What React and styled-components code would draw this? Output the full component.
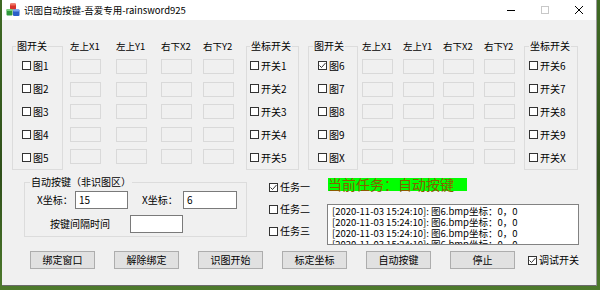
import React from "react";
import styled, { createGlobalStyle } from "styled-components";

const GlobalStyle = createGlobalStyle`
  html, body {
    margin: 0;
    padding: 0;
  }
  body {
    width: 600px;
    height: 290px;
    overflow: hidden;
    background: linear-gradient(180deg, #3f6a24 0%, #2f4f1a 60%, #4d7a2c 100%);
    font-family: "Noto Sans CJK SC", "Noto Sans", sans-serif;
    color: #000;
  }
`;

const Window = styled.div`
  margin-left: 2px;
  width: 595px;
  height: 286px;
  background: #f0f0f0;
  border-right: 1px solid #9a9a9a;
  border-bottom: 1px solid #6a6a6a;
  box-sizing: border-box;
  display: flex;
  flex-direction: column;
`;

const TitleBar = styled.div`
  height: 20px;
  background: #fff;
  display: flex;
  align-items: center;
  flex-shrink: 0;
`;

const Title = styled.span`
  margin-left: 4px;
  font-size: 9.5px;
  line-height: 12px;
  flex: 1;
`;

const Control = styled.div`
  width: 34px;
  height: 20px;
  display: flex;
  align-items: center;
  justify-content: center;
`;

const Body = styled.div`
  padding: 20px 0 0 10px;
  display: flex;
  flex-direction: column;
`;

const TopRow = styled.div`
  display: flex;
  align-items: flex-start;
`;

const Group = styled.fieldset`
  margin: 0 0 0 ${(p) => p.$ml || 0}px;
  width: ${(p) => p.$w}px;
  height: ${(p) => p.$h}px;
  box-sizing: border-box;
  border: 1px solid #dcdcdc;
  padding: 0;
  min-width: 0;
`;

const Legend = styled.legend`
  font-size: 10px;
  line-height: 12px;
  padding: 0 1px;
  margin-left: ${(p) => p.$ml || 3}px;
`;

const CheckList = styled.div`
  margin-top: 2px;
  padding-left: ${(p) => p.$pl}px;
  display: flex;
  flex-direction: column;
`;

const CheckRow = styled.label`
  height: ${(p) => p.$h || 23}px;
  display: flex;
  align-items: center;
  gap: 2px;
  font-size: 10px;
  line-height: 12px;
  white-space: nowrap;
`;

const Box = styled.span`
  width: 9px;
  height: 9px;
  box-sizing: border-box;
  border: 1px solid #333;
  background: #fff;
  display: flex;
  align-items: center;
  justify-content: center;
  flex-shrink: 0;
`;

const Column = styled.div`
  margin-left: ${(p) => p.$ml}px;
  width: 31px;
  display: flex;
  flex-direction: column;
`;

const Header = styled.div`
  height: 12px;
  line-height: 12px;
  font-size: 9.5px;
  white-space: nowrap;
`;

const BoxList = styled.div`
  margin-top: 7px;
  display: flex;
  flex-direction: column;
  gap: 7.5px;
`;

const CoordBox = styled.div`
  width: 31px;
  height: 15px;
  box-sizing: border-box;
  border: 1px solid #d9d9d9;
  background: #f0f0f0;
`;

const MiddleRow = styled.div`
  margin-top: 6px;
  display: flex;
  align-items: flex-start;
`;

const FieldRow = styled.div`
  display: flex;
  align-items: center;
  height: 18px;
  padding-left: 12px;
  margin-top: ${(p) => p.$mt}px;
`;

const FieldLabel = styled.span`
  width: ${(p) => p.$w}px;
  margin-left: ${(p) => p.$ml || 0}px;
  font-size: 10px;
  line-height: 12px;
  white-space: nowrap;
`;

const TextBox = styled.div`
  width: ${(p) => p.$w}px;
  height: 18px;
  box-sizing: border-box;
  border: 1px solid #7a7a7a;
  background: #fff;
  font-size: 10px;
  line-height: 16px;
  padding-left: 3px;
`;

const TaskColumn = styled.div`
  margin-left: 22px;
  width: 58px;
  display: flex;
  flex-direction: column;
`;

const StatusColumn = styled.div`
  display: flex;
  flex-direction: column;
  align-items: flex-start;
  margin-top: 2px;
`;

const StatusLabel = styled.div`
  margin-left: 1px;
  height: 13px;
  width: 139px;
  background: #00ff00;
  color: #8a5c00;
  font-family: "Noto Sans CJK SC", serif;
  font-size: 14px;
  line-height: 13px;
  white-space: nowrap;
`;

const LogBox = styled.div`
  margin-top: 13px;
  width: 252px;
  height: 41px;
  box-sizing: border-box;
  border: 1px solid #828282;
  background: #fff;
  padding: 1px 4px;
  overflow: hidden;
  font-size: 9.5px;
  line-height: 11px;
  white-space: nowrap;
`;

const ButtonRow = styled.div`
  margin-top: 6px;
  margin-left: 18px;
  display: flex;
  align-items: center;
  gap: 19px;
`;

const Button = styled.button`
  width: 65px;
  height: 18px;
  padding: 0;
  background: #e1e1e1;
  border: 1px solid #adadad;
  font-family: inherit;
  font-size: 10px;
  line-height: 12px;
  color: #000;
`;

const DebugToggle = styled.div`
  margin-left: -6px;
`;

const CheckMark = () => (
  <svg width="7" height="7" viewBox="0 0 7 7">
    <polyline points="0.5,3.5 2.5,5.5 6.5,1" fill="none" stroke="#333" strokeWidth="1" />
  </svg>
);

const Check = ({ label, checked, h }) => (
  <CheckRow $h={h}>
    <Box>{checked && <CheckMark />}</Box>
    {label}
  </CheckRow>
);

const AppIcon = () => (
  <svg width="14" height="14" viewBox="0 0 14 14" style={{ marginLeft: 4 }}>
    <rect x="4" y="0.5" width="6" height="6" rx="1" fill="#d8322a" />
    <rect x="4" y="0.5" width="6" height="2" rx="1" fill="#f07060" />
    <rect x="0.5" y="6" width="6" height="6.5" rx="1" fill="#2f9a3a" />
    <rect x="0.5" y="6" width="6" height="2" rx="1" fill="#78d07a" />
    <rect x="7" y="6.5" width="6.5" height="6.5" rx="1" fill="#2a5fc8" />
    <rect x="7" y="6.5" width="6.5" height="2" rx="1" fill="#7aa4f0" />
  </svg>
);

const headers = ["左上X1", "左上Y1", "右下X2", "右下Y2"];

const Panel = ({ nums, checked, ml, cols, g1, g2 }) => (
  <>
    <Group $ml={ml} $w={g1.w} $h={130}>
      <Legend $ml={g1.lm}>图开关</Legend>
      <CheckList $pl={g1.pl}>
        {nums.map((n, i) => (
          <Check key={n} label={"图" + n} checked={checked && i === 0} />
        ))}
      </CheckList>
    </Group>
    {headers.map((h, i) => (
      <Column key={h} $ml={cols[i]}>
        <Header>{h}</Header>
        <BoxList>
          {nums.map((n) => (
            <CoordBox key={n} />
          ))}
        </BoxList>
      </Column>
    ))}
    <Group $ml={g2.ml} $w={g2.w} $h={130}>
      <Legend $ml={g2.lm}>坐标开关</Legend>
      <CheckList $pl={g2.pl}>
        {nums.map((n) => (
          <Check key={n} label={"开关" + n} />
        ))}
      </CheckList>
    </Group>
  </>
);

const logLine = "[2020-11-03 15:24:10]: 图6.bmp坐标：0，0";

export default function App() {
  return (
    <>
      <GlobalStyle />
      <Window>
        <TitleBar>
          <AppIcon />
          <Title>识图自动按键-吾爱专用-rainsword925</Title>
          <Control>
            <svg width="10" height="10" viewBox="0 0 10 10">
              <line x1="1" y1="5.5" x2="9" y2="5.5" stroke="#000" strokeWidth="1" />
            </svg>
          </Control>
          <Control>
            <svg width="10" height="10" viewBox="0 0 10 10">
              <rect x="1.5" y="1.5" width="7" height="7" fill="none" stroke="#c8c8c8" strokeWidth="1" />
            </svg>
          </Control>
          <Control>
            <svg width="10" height="10" viewBox="0 0 10 10">
              <path d="M1 1 L9 9 M9 1 L1 9" stroke="#000" strokeWidth="1" />
            </svg>
          </Control>
        </TitleBar>
        <Body>
          <TopRow>
            <Panel
              nums={["1", "2", "3", "4", "5"]}
              ml={0}
              cols={[7, 15, 14, 11]}
              g1={{ w: 51, pl: 9, lm: 3 }}
              g2={{ ml: 12, w: 53, pl: 3, lm: 3 }}
            />
            <Panel
              nums={["6", "7", "8", "9", "X"]}
              checked
              ml={9}
              cols={[4, 10, 9, 10]}
              g1={{ w: 50, pl: 9, lm: 4 }}
              g2={{ ml: 9, w: 54, pl: 4, lm: 4 }}
            />
          </TopRow>
          <MiddleRow>
            <Group $ml={12} $w={223} $h={61}>
              <Legend $ml={5}>自动按键（非识图区）</Legend>
              <FieldRow $mt={3}>
                <FieldLabel $w={38}>X坐标：</FieldLabel>
                <TextBox $w={53}>15</TextBox>
                <FieldLabel $w={41} $ml={14}>X坐标：</FieldLabel>
                <TextBox $w={54}>6</TextBox>
              </FieldRow>
              <FieldRow $mt={6}>
                <FieldLabel $w={80} $ml={13}>按键间隔时间</FieldLabel>
                <TextBox $w={53} />
              </FieldRow>
            </Group>
            <TaskColumn>
              <Check label="任务一" checked h={22} />
              <Check label="任务二" h={22} />
              <Check label="任务三" h={22} />
            </TaskColumn>
            <StatusColumn>
              <StatusLabel>当前任务：自动按键</StatusLabel>
              <LogBox>
                <div>{logLine}</div>
                <div>{logLine}</div>
                <div>{logLine}</div>
                <div>{logLine}</div>
              </LogBox>
            </StatusColumn>
          </MiddleRow>
          <ButtonRow>
            <Button>绑定窗口</Button>
            <Button>解除绑定</Button>
            <Button>识图开始</Button>
            <Button>标定坐标</Button>
            <Button>自动按键</Button>
            <Button>停止</Button>
            <DebugToggle>
              <Check label="调试开关" checked h={18} />
            </DebugToggle>
          </ButtonRow>
        </Body>
      </Window>
    </>
  );
}
